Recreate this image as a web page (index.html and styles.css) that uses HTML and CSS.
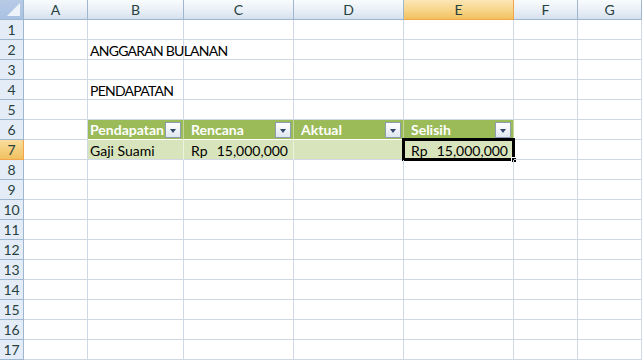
FILE: index.html
```html
<!DOCTYPE html>
<html>
<head>
<meta charset="utf-8">
<link rel="stylesheet" href="styles.css">
</head>
<body>
<div class="sheet">
  <div class="corner"><span class="tri"></span></div>
  <div class="ch">A</div><div class="ch">B</div><div class="ch">C</div><div class="ch">D</div><div class="ch sel">E</div><div class="ch">F</div><div class="ch">G</div>

  <div class="rh">1</div><div class="c"></div><div class="c"></div><div class="c"></div><div class="c"></div><div class="c"></div><div class="c"></div><div class="c"></div>
  <div class="rh">2</div><div class="c"></div><div class="c caps">ANGGARAN BULANAN</div><div class="c"></div><div class="c"></div><div class="c"></div><div class="c"></div><div class="c"></div>
  <div class="rh">3</div><div class="c"></div><div class="c"></div><div class="c"></div><div class="c"></div><div class="c"></div><div class="c"></div><div class="c"></div>
  <div class="rh">4</div><div class="c"></div><div class="c caps">PENDAPATAN</div><div class="c"></div><div class="c"></div><div class="c"></div><div class="c"></div><div class="c"></div>
  <div class="rh">5</div><div class="c"></div><div class="c"></div><div class="c"></div><div class="c"></div><div class="c"></div><div class="c"></div><div class="c"></div>
  <div class="rh">6</div><div class="c"></div>
  <div class="c th"><span>Pendapatan</span><span class="dd"></span></div>
  <div class="c th"><span>Rencana</span><span class="dd"></span></div>
  <div class="c th"><span>Aktual</span><span class="dd"></span></div>
  <div class="c th"><span>Selisih</span><span class="dd"></span></div>
  <div class="c"></div><div class="c"></div>
  <div class="rh sel">7</div><div class="c"></div>
  <div class="c td"><span>Gaji Suami</span></div>
  <div class="c td"><span>Rp</span><span>15,000,000</span></div>
  <div class="c td"></div>
  <div class="c td active"><span>Rp</span><span>15,000,000</span><span class="handle"></span></div>
  <div class="c"></div><div class="c"></div>
  <div class="rh">8</div><div class="c"></div><div class="c"></div><div class="c"></div><div class="c"></div><div class="c"></div><div class="c"></div><div class="c"></div>
  <div class="rh">9</div><div class="c"></div><div class="c"></div><div class="c"></div><div class="c"></div><div class="c"></div><div class="c"></div><div class="c"></div>
  <div class="rh">10</div><div class="c"></div><div class="c"></div><div class="c"></div><div class="c"></div><div class="c"></div><div class="c"></div><div class="c"></div>
  <div class="rh">11</div><div class="c"></div><div class="c"></div><div class="c"></div><div class="c"></div><div class="c"></div><div class="c"></div><div class="c"></div>
  <div class="rh">12</div><div class="c"></div><div class="c"></div><div class="c"></div><div class="c"></div><div class="c"></div><div class="c"></div><div class="c"></div>
  <div class="rh">13</div><div class="c"></div><div class="c"></div><div class="c"></div><div class="c"></div><div class="c"></div><div class="c"></div><div class="c"></div>
  <div class="rh">14</div><div class="c"></div><div class="c"></div><div class="c"></div><div class="c"></div><div class="c"></div><div class="c"></div><div class="c"></div>
  <div class="rh">15</div><div class="c"></div><div class="c"></div><div class="c"></div><div class="c"></div><div class="c"></div><div class="c"></div><div class="c"></div>
  <div class="rh">16</div><div class="c"></div><div class="c"></div><div class="c"></div><div class="c"></div><div class="c"></div><div class="c"></div><div class="c"></div>
  <div class="rh">17</div><div class="c"></div><div class="c"></div><div class="c"></div><div class="c"></div><div class="c"></div><div class="c"></div><div class="c"></div>
</div>
</body>
</html>
```
FILE: styles.css
```css
* { box-sizing: border-box; }
html, body { margin: 0; padding: 0; background: #fff; overflow: hidden; }
.sheet {
  display: grid;
  grid-template-columns: 24px 64px 96px 110px 110px 110px 64px 64px;
  grid-template-rows: repeat(18, 20px);
  width: 642px;
  height: 360px;
  font-family: "Lato", "Open Sans", sans-serif;
  font-size: 14px;
  color: #000;
}
.corner {
  position: relative;
  background: linear-gradient(#b7cbe6, #a9c2e3);
  border-right: 1px solid #9eb6ce;
  border-bottom: 1px solid #9eb6ce;
}
.corner .tri {
  position: absolute;
  right: 3px;
  bottom: 3px;
  width: 0;
  height: 0;
  border-left: 13px solid transparent;
  border-bottom: 13px solid #eef3fa;
}
.ch {
  display: flex;
  align-items: center;
  justify-content: center;
  background: linear-gradient(#f9fcfd 0%, #eaf0f7 50%, #d6e1ee 100%);
  border-right: 1px solid #9eb6ce;
  border-bottom: 1px solid #9eb6ce;
  color: #27413e;
  font-size: 14px;
}
.ch.sel {
  background: linear-gradient(#fbe6b6 0%, #f8d68c 50%, #f1c15f 100%);
  border-right-color: #f2a54a;
  border-bottom: 1px solid #f2a54a;
}
.rh {
  display: flex;
  align-items: center;
  justify-content: center;
  background: #e4ecf7;
  border-right: 1px solid #9eb6ce;
  border-bottom: 1px solid #9eb6ce;
  color: #27413e;
  font-size: 14px;
}
.rh.sel {
  background: linear-gradient(#f9dd9d, #f1c15f);
  border-right-color: #f2a54a;
  border-bottom-color: #f2a54a;
}
.c {
  display: flex;
  align-items: center;
  padding: 1px 2px 0;
  border-right: 1px solid #d0d7e5;
  border-bottom: 1px solid #d0d7e5;
  white-space: nowrap;
  position: relative;
}
.caps { letter-spacing: -0.75px; }
.th {
  background: #9bbb59;
  color: #fff;
  font-weight: bold;
  justify-content: space-between;
  border-right-color: #c3d69b;
  border-bottom-color: #fff;
  padding: 0 2px;
}
.th + .th { padding-left: 7px; }
.dd {
  width: 16px;
  height: 16px;
  border: 1px solid #8c9db3;
  background: linear-gradient(#ffffff, #dfe6f0);
  position: relative;
  flex: none;
}
.dd::after {
  content: "";
  position: absolute;
  left: 4px;
  top: 6px;
  border-left: 3.5px solid transparent;
  border-right: 3.5px solid transparent;
  border-top: 4px solid #34496b;
}
.td {
  background: #d8e4bc;
  justify-content: space-between;
  padding: 1px 5px 0 2px;
  border-right-color: #eef3e0;
  border-bottom-color: #d0d7e5;
}
.td + .td { padding-left: 7px; }
.active::before {
  content: "";
  position: absolute;
  left: -2px;
  top: -2px;
  right: -2px;
  bottom: -2px;
  border: 3px solid #000;
  pointer-events: none;
}
.active .handle {
  position: absolute;
  right: -4px;
  bottom: -4px;
  width: 6px;
  height: 6px;
  background: #000;
  border: 1px solid #fff;
}
```
